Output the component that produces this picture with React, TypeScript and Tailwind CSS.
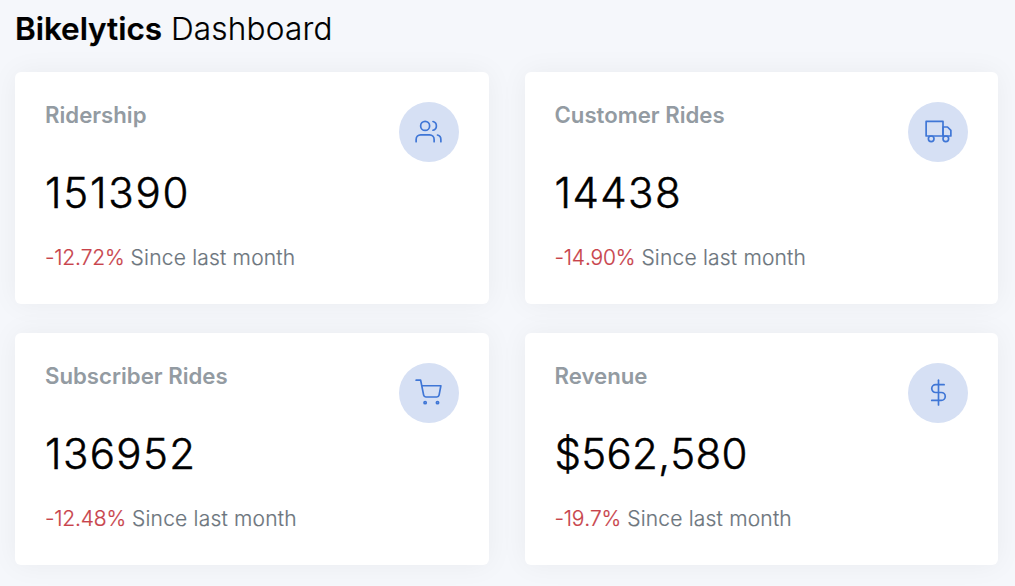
import { FiUsers, FiTruck, FiShoppingCart, FiDollarSign } from "react-icons/fi";
import type { IconType } from "react-icons";

type Stat = { title: string; value: string; tracking: string; change: string; icon: IconType };

const stats: Stat[] = [
  { title: "Ridership", value: "151390", tracking: "tracking-[1.75px]", change: "-12.72%", icon: FiUsers },
  { title: "Customer Rides", value: "14438", tracking: "tracking-[1.4px]", change: "-14.90%", icon: FiTruck },
  { title: "Subscriber Rides", value: "136952", tracking: "tracking-[1.35px]", change: "-12.48%", icon: FiShoppingCart },
  { title: "Revenue", value: "$562,580", tracking: "tracking-[0.3px]", change: "-19.7%", icon: FiDollarSign },
];

function StatCard({ title, value, tracking, change, icon: Icon }: Stat) {
  return (
    <section className="h-[232px] rounded-[6px] bg-white px-[30px] pt-[30px] shadow-[0_0_28px_0_rgba(33,37,41,0.05)]">
      <div className="flex h-[60px] justify-between">
        <h2 className="-mt-px text-[22.2px] leading-[27px] font-semibold text-[#939ba2]">{title}</h2>
        <div className="flex size-[60px] items-center justify-center rounded-full bg-[#d6e0f4] pb-px">
          <Icon size={27} className="stroke-[1.5] text-[#3f76d6]" />
        </div>
      </div>
      <p className={`mt-[5px] text-[42px] leading-[52px] font-light text-black [font-kerning:none] [-webkit-text-stroke:0.5px] ${tracking}`}>
        {value}
      </p>
      <p className="mt-[23px] text-[21px] leading-[32px] font-light tracking-[0.2px] text-[#6c757d] [font-kerning:none] [-webkit-text-stroke:0.2px]">
        <span className="tracking-[-0.2px] text-[#c8434b]">{change}</span> Since last month
      </p>
    </section>
  );
}

export default function App() {
  return (
    <main className="h-[586px] overflow-hidden bg-[#f5f7fb] pt-[9px] pr-[17px] pl-[15px] font-['Inter',sans-serif]">
      <h1 className="text-[31.5px] leading-[39px] font-light tracking-[0.2px] text-black [-webkit-text-stroke:0.2px]">
        <strong className="font-semibold tracking-[-0.05px]">Bikelytics</strong> Dashboard
      </h1>
      <div className="mt-[24px] grid grid-cols-2 gap-x-[36px] gap-y-[29px]">
        {stats.map((s) => (
          <StatCard key={s.title} {...s} />
        ))}
      </div>
    </main>
  );
}
